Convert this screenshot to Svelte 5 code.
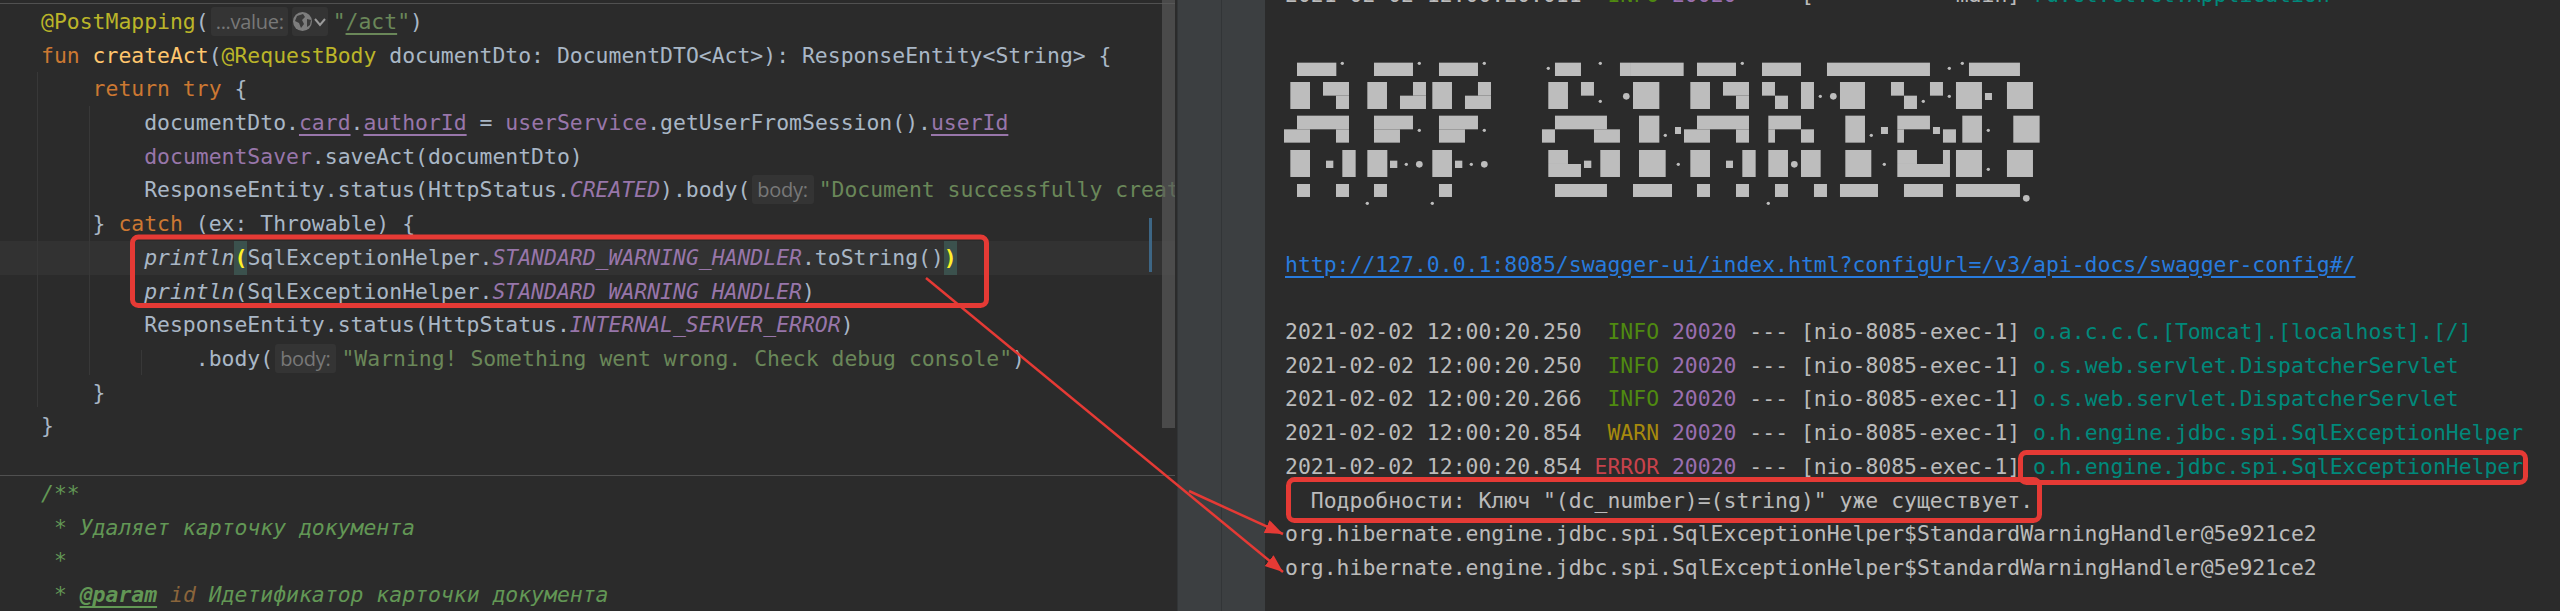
<script>
	// editor lines: [class, text]
	const p = (t) => ['p', t];
	const top = [
		[['an', '@PostMapping'], p('('), ['inlay wide', '...value:'], ['globe', ''], ['st', '"'], ['st u', '/act'], ['st', '"'], p(')')],
		[['k', 'fun '], ['fn', 'createAct'], p('('), ['an', '@RequestBody '], p('documentDto: DocumentDTO<Act>): ResponseEntity<String> {')],
		[p('    '), ['k', 'return try '], p('{')],
		[p('        documentDto.'), ['v u', 'card'], p('.'), ['v u', 'authorId'], p(' = '), ['v', 'userService'], p('.getUserFromSession().'), ['v u', 'userId']],
		[p('        '), ['v', 'documentSaver'], p('.saveAct(documentDto)')],
		[p('        ResponseEntity.status(HttpStatus.'), ['vi', 'CREATED'], p(').body('), ['inlay', 'body:'], ['st', '"Document successfully created"'], p(')')],
		[p('    } '), ['k', 'catch '], p('(ex: Throwable) {')],
		[p('        '), ['it', 'println'], ['br', '('], p('SqlExceptionHelper.'), ['vi', 'STANDARD_WARNING_HANDLER'], p('.toString()'), ['br', ')']],
		[p('        '), ['it', 'println'], p('(SqlExceptionHelper.'), ['vi', 'STANDARD_WARNING_HANDLER'], p(')')],
		[p('        ResponseEntity.status(HttpStatus.'), ['vi', 'INTERNAL_SERVER_ERROR'], p(')')],
		[p('            .body('), ['inlay', 'body:'], ['st', '"Warning! Something went wrong. Check debug console"'], p(')')],
		[p('    }')],
		[p('}')]
	];
	const doc = [
		[['c', '/**']],
		[['c', ' * Удаляет карточку документа']],
		[['c', ' *']],
		[['c', ' * '], ['c tag', '@param'], ['c', ' '], ['c id', 'id'], ['c', ' Идетификатор карточки документа']]
	];
	const guides = [
		[37, 72, 407],
		[89, 106, 375],
		[141, 350, 375]
	];

	const logs = [
		['2021-02-02 12:00:20.250', '  INFO', 'info', 'o.a.c.c.C.[Tomcat].[localhost].[/]'],
		['2021-02-02 12:00:20.250', '  INFO', 'info', 'o.s.web.servlet.DispatcherServlet'],
		['2021-02-02 12:00:20.266', '  INFO', 'info', 'o.s.web.servlet.DispatcherServlet'],
		['2021-02-02 12:00:20.854', '  WARN', 'warn', 'o.h.engine.jdbc.spi.SqlExceptionHelper'],
		['2021-02-02 12:00:20.854', ' ERROR', 'err', 'o.h.engine.jdbc.spi.SqlExceptionHelper']
	];

	// banner pieces, measured at 3x in two crops: [x1, x2, y1, y2]
	const R1 = [38, 78], R2 = [96, 177], R3 = [197, 278], R4 = [300, 381], R5 = [402, 441];
	const UP2 = [96, 137], LO2 = [137, 177], UP3 = [197, 238], LO3 = [238, 278], UP4 = [300, 342], LO4 = [342, 381];
	const SQ2 = [129, 150], SQ3 = [231, 252], SQ4 = [332, 354];
	const left = [
		[78, 196, R1], [309, 426, R1], [504, 621, R1], [852, 930, R1], [1047, 1080, R1],
		[58, 117, R2], [156, 234, UP2], [195, 234, LO2], [289, 348, R2], [426, 465, UP2], [387, 465, LO2],
		[484, 543, R2], [621, 660, UP2], [582, 660, LO2], [832, 891, R2], [930, 969, UP2],
		[78, 234, UP3], [39, 117, LO3], [195, 234, LO3], [309, 426, UP3], [309, 387, LO3],
		[504, 621, UP3], [504, 582, LO3], [852, 1008, UP3], [813, 852, LO3], [969, 1047, LO3],
		[58, 117, R4], [165, 187, SQ4], [214, 254, R4], [289, 349, R4], [357, 379, SQ4], [484, 543, R4], [552, 574, SQ4],
		[832, 891, UP4], [832, 930, LO4], [939, 961, SQ4], [988, 1047, R4],
		[78, 117, R5], [195, 234, R5], [309, 348, R5], [504, 543, R5], [852, 1008, R5]
	];
	const right = [
		[0, 158, R1], [198, 315, R1], [393, 510, R1], [588, 897, R1], [1014, 1167, R1],
		[6, 85, R2], [178, 237, R2], [276, 354, UP2], [315, 354, LO2], [393, 432, UP2], [432, 471, LO2], [510, 549, R2],
		[627, 702, R2], [780, 819, UP2], [819, 858, LO2], [897, 936, UP2], [975, 1053, R2], [1062, 1083, SQ2], [1128, 1206, R2],
		[24, 85, R3], [132, 150, SQ3], [198, 354, UP3], [159, 237, LO3], [315, 354, LO3], [412, 510, UP3], [412, 432, LO3], [510, 549, LO3],
		[643, 702, R3], [750, 771, SQ3], [799, 897, UP3], [799, 819, LO3], [906, 927, SQ3], [936, 975, LO3], [994, 1053, R3], [1147, 1226, R3],
		[24, 104, R4], [178, 237, R4], [285, 306, SQ4], [334, 374, R4], [412, 471, R4], [510, 569, R4], [643, 721, R4],
		[799, 858, UP4], [799, 957, LO4], [936, 957, UP4], [975, 1053, R4], [1128, 1206, R4],
		[6, 123, R5], [198, 237, R5], [315, 354, R5], [432, 471, R5], [549, 588, R5], [627, 741, R5], [819, 936, R5], [975, 1167, R5]
	];
	// dots: [x, y, r]
	const leftDots = [
		[214, 40, 5], [445, 40, 5], [640, 40, 5], [832, 55, 5], [988, 40, 5], [988, 154, 5], [1066, 139, 10],
		[445, 241, 5], [640, 241, 5], [406, 343, 5], [445, 343, 10], [601, 343, 5], [640, 343, 10], [289, 460, 5], [484, 460, 5]
	];
	const rightDots = [
		[334, 40, 5], [955, 55, 5], [994, 40, 5], [568, 139, 5], [607, 139, 10], [877, 154, 5], [955, 139, 5],
		[103, 256, 5], [721, 256, 5], [1072, 241, 5], [142, 343, 5], [490, 343, 10], [760, 343, 5], [1072, 358, 5],
		[1186, 445, 10], [412, 460, 5]
	];
</script>

<main class="screen">
	<section class="editor">
		<div class="rule"></div>
		<div class="code">
			{#each top as line, i}
				<div class="ln" class:current={i === 7}>{#each line as [c, t]}{#if c === 'globe'}<span class="globe"><svg width="36" height="29" viewBox="0 0 36 29"><circle cx="10.5" cy="14.5" r="9.5" fill="#7d7d7d" /><path d="M5 9 L11 7 L13 10 L10 13 L12 17 L9 21 L7 16 L3 14 Z M15 12 L19 13 L18 18 L15 20 Z" fill="#3a3a3a" /><path d="M23 12 L28 18 L33 12" fill="none" stroke="#9a9a9a" stroke-width="2" /></svg></span>{:else}<span class={c}>{t}</span>{/if}{/each}</div>
			{/each}
		</div>
		<div class="divider"></div>
		<div class="code doc">
			{#each doc as line}
				<div class="ln">{#each line as [c, t]}<span class={c}>{t}</span>{/each}</div>
			{/each}
		</div>
		{#each guides as [x, y1, y2]}
			<div class="guide" style="left:{x}px;top:{y1}px;height:{y2 - y1}px"></div>
		{/each}
		<div class="thumb"></div>
		<div class="mark"></div>
	</section>

	<div class="band"></div>
	<div class="band"></div>

	<section class="console">
		<div class="ln">2021-02-02 12:00:20.011{'  '}<span class="info">INFO</span> <span class="pid">20020</span> --- [{'           '}main] <span class="lg">ru.ct.ct.ct.Application</span></div>
		<svg class="banner" width="800" height="160" viewBox="1270 50 800 160">
			<g transform="translate(1270 50) scale(0.3333)">
				{#each left as [x1, x2, [y1, y2]]}
					<rect x={x1} y={y1} width={x2 - x1} height={y2 - y1} />
				{/each}
				{#each leftDots as [x, y, r]}
					<circle cx={x} cy={y} {r} />
				{/each}
			</g>
			<g transform="translate(1630 50) scale(0.3333)">
				{#each right as [x1, x2, [y1, y2]]}
					<rect x={x1} y={y1} width={x2 - x1} height={y2 - y1} />
				{/each}
				{#each rightDots as [x, y, r]}
					<circle cx={x} cy={y} {r} />
				{/each}
			</g>
		</svg>
		<div class="ln link">http://127.0.0.1:8085/swagger-ui/index.html?configUrl=/v3/api-docs/swagger-config#/</div>
		<div class="ln"></div>
		{#each logs as [time, level, cls, logger]}
			<div class="ln">{time}<span class={cls}>{level}</span> <span class="pid">20020</span> --- [nio-8085-exec-1] <span class="lg">{logger}</span></div>
		{/each}
		<div class="ln">{'  Подробности: Ключ "(dc_number)=(string)" уже существует.'}</div>
		<div class="ln">org.hibernate.engine.jdbc.spi.SqlExceptionHelper$StandardWarningHandler@5e921ce2</div>
		<div class="ln">org.hibernate.engine.jdbc.spi.SqlExceptionHelper$StandardWarningHandler@5e921ce2</div>
	</section>

	<!-- red annotations drawn over the screenshot -->
	<svg class="notes" width="2560" height="611" viewBox="0 0 2560 611">
		<defs>
			<marker id="head" markerUnits="userSpaceOnUse" markerWidth="20" markerHeight="16" refX="18" refY="8" orient="auto">
				<path d="M0 1 L18 8 L0 15 Z" fill="#e53a35" />
			</marker>
		</defs>
		<rect x="132.5" y="237" width="854" height="68.5" rx="6" />
		<rect x="1288.5" y="479.5" width="751" height="41" rx="6" />
		<rect x="2020.5" y="452.5" width="505" height="30" rx="6" />
		<line x1="926" y1="278" x2="1283" y2="572" marker-end="url(#head)" />
		<line x1="1189" y1="491" x2="1283" y2="534" marker-end="url(#head)" />
	</svg>
</main>

<style>
	:global(body) {
		margin: 0;
		background: #2b2b2b;
	}

	.screen {
		position: relative;
		display: flex;
		width: 2560px;
		height: 611px;
		overflow: hidden;
		background: #2b2b2b;
		font-family: 'DejaVu Sans Mono', 'Liberation Mono', monospace;
		font-size: 21.43px;
		color: #a9b7c6;
	}

	.ln {
		height: 33.7px;
		line-height: 33.7px;
		white-space: pre;
	}

	/* editor */
	.editor {
		position: relative;
		flex: none;
		width: 1175px;
		margin-right: 2px;
		overflow: hidden;
	}

	.rule {
		height: 1px;
		margin: 3px 0 1px;
		background: #515151;
	}

	.code {
		padding-left: 41px;
	}

	.current {
		margin-left: -41px;
		padding-left: 41px;
		background: #323232;
	}

	.divider {
		height: 1px;
		margin: 32px 0 1px;
		background: #505050;
	}

	.guide {
		position: absolute;
		width: 1px;
		background: #383838;
	}

	.thumb {
		position: absolute;
		top: 0;
		right: 0;
		width: 13px;
		height: 428px;
		background: rgba(90, 90, 90, 0.65);
	}

	.mark {
		position: absolute;
		left: 1149px;
		top: 218px;
		width: 3px;
		height: 54px;
		background: #3d6685;
	}

	.k { color: #cc7832; }
	.fn { color: #ffc66d; }
	.an { color: #bbb529; }
	.st { color: #6a8759; }
	.v { color: #9876aa; }
	.vi { color: #9876aa; font-style: italic; }
	.it { font-style: italic; }
	.u { text-decoration: underline; text-underline-offset: 4px; }

	.br {
		display: inline-block;
		height: 33.7px;
		background: #3b514d;
		color: #ffef28;
		font-weight: 700;
		vertical-align: top;
	}

	.inlay {
		display: inline-block;
		height: 29px;
		margin: 2px 5px 0 2px;
		padding: 0 6px 0 5px;
		border-radius: 3px;
		background: #343434;
		color: #787878;
		font-family: 'Open Sans', 'Noto Sans', sans-serif;
		font-size: 20px;
		line-height: 29px;
		letter-spacing: -0.3px;
		vertical-align: top;
	}

	.inlay.wide {
		margin-right: 0;
		padding-right: 4px;
	}

	.globe {
		display: inline-block;
		height: 29px;
		margin: 2px 5px 0 4px;
		border-radius: 3px;
		background: #343434;
		vertical-align: top;
	}

	.globe svg {
		display: block;
	}

	.c { color: #629755; font-style: italic; }
	.tag { font-weight: 700; text-decoration: underline; text-underline-offset: 4px; }
	.c.id { color: #8a653b; }

	/* tool window gap */
	.band {
		flex: none;
		width: 43px;
		border-left: 1px solid #323537;
		background: #3c3f41;
	}

	/* console */
	.console {
		flex: 1;
		min-width: 0;
		margin-top: -22px;
		padding-left: 20px;
		color: #bbbbbb;
	}

	.banner {
		display: block;
		margin: 38px 0 38px -14px;
		fill: #bdbdbd;
	}

	.link {
		color: #287bde;
		text-decoration: underline;
		text-underline-offset: 4px;
	}

	.info { color: #4f8a10; }
	.warn { color: #a68a0d; }
	.err { color: #c7424b; }
	.pid { color: #9a6fb0; }
	.lg { color: #00897b; }

	/* annotations */
	.notes {
		position: absolute;
		top: 0;
		left: 0;
		pointer-events: none;
	}

	.notes rect {
		fill: none;
		stroke: #e53a35;
		stroke-width: 5;
	}

	.notes line {
		stroke: #e53a35;
		stroke-width: 2.5;
	}
</style>
